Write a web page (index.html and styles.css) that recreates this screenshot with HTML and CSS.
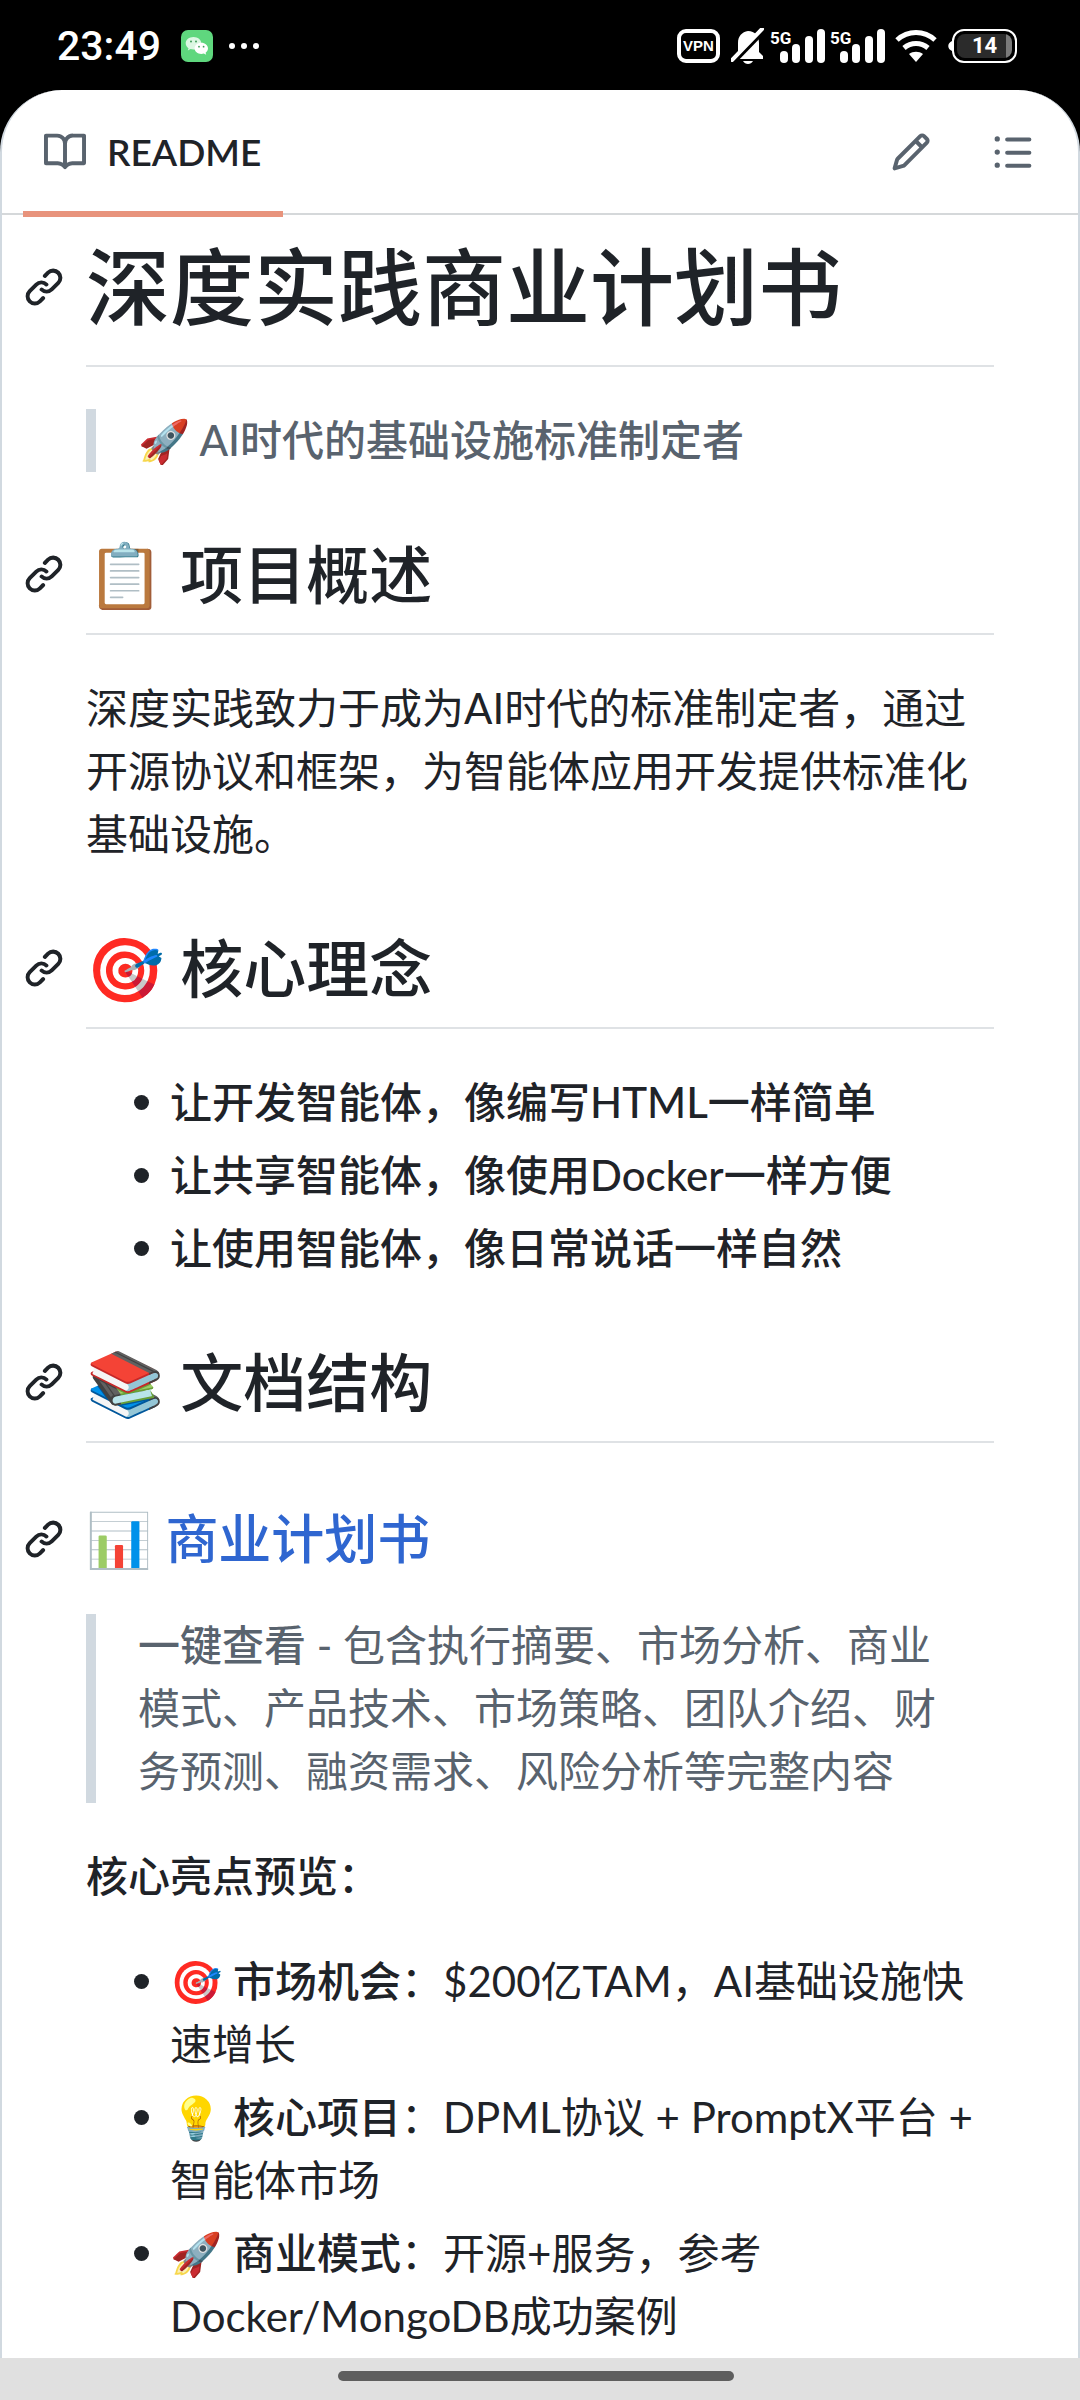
FILE: index.html
```html
<!DOCTYPE html>
<html lang="zh-CN">
<head>
    <meta charset="UTF-8">
    <meta name="viewport" content="width=device-width, initial-scale=1.0">
    <title>README</title>
    <link rel="stylesheet" href="styles.css">
</head>
<body>
    <svg class="defs" aria-hidden="true">
        <symbol id="icon-link" viewBox="0 0 16 16">
            <path d="m7.775 3.275 1.25-1.25a3.5 3.5 0 1 1 4.95 4.95l-2.5 2.5a3.5 3.5 0 0 1-4.95 0 .751.751 0 0 1 .018-1.042.751.751 0 0 1 1.042-.018 1.998 1.998 0 0 0 2.83 0l2.5-2.5a2.002 2.002 0 0 0-2.83-2.83l-1.25 1.25a.751.751 0 0 1-1.042-.018.751.751 0 0 1-.018-1.042Zm-4.69 9.64a1.998 1.998 0 0 0 2.83 0l1.25-1.25a.751.751 0 0 1 1.042.018.751.751 0 0 1 .018 1.042l-1.25 1.25a3.5 3.5 0 1 1-4.95-4.95l2.5-2.5a3.5 3.5 0 0 1 4.95 0 .751.751 0 0 1-.018 1.042.751.751 0 0 1-1.042.018 1.998 1.998 0 0 0-2.83 0l-2.5 2.5a1.998 1.998 0 0 0 0 2.83Z"/>
        </symbol>
        <symbol id="icon-signal" viewBox="0 0 46 34">
            <rect x="0" y="22" width="8" height="12" rx="4"/>
            <rect x="12" y="15" width="8" height="19" rx="4"/>
            <rect x="25" y="7" width="8" height="27" rx="4"/>
            <rect x="37" y="0" width="8" height="34" rx="4"/>
        </symbol>
    </svg>

    <div class="status-bar">
        <div class="status-left">
            <span class="time">23:49</span>
            <svg class="wechat" viewBox="0 0 32 32">
                <rect width="32" height="32" rx="7" fill="#5fd77e"/>
                <path d="M12.500 7c-4.400 0-7.800 2.800-7.800 6.300 0 2 1.100 3.700 2.800 4.900l-.7 2.300 2.700-1.400c1 .3 2 .5 3 .5 4.300 0 7.800-2.800 7.800-6.300S16.800 7 12.500 7Z" fill="#dcf7e3"/>
                <path d="M20.300 12.700c-3.800 0-6.700 2.500-6.700 5.600s3 5.600 6.700 5.600c.9 0 1.700-.1 2.500-.4l2.400 1.200-.6-2c1.500-1.100 2.400-2.600 2.400-4.400 0-3.100-3-5.600-6.700-5.600Z" fill="#fff"/>
                <g fill="#3f9c58">
                    <circle cx="10" cy="11.500" r="1"/>
                    <circle cx="15" cy="11.500" r="1"/>
                    <circle cx="18" cy="16.700" r=".9"/>
                    <circle cx="22.600" cy="16.700" r=".9"/>
                </g>
            </svg>
            <svg class="more" viewBox="0 0 30 6">
                <circle cx="3" cy="3" r="3"/>
                <circle cx="15" cy="3" r="3"/>
                <circle cx="27" cy="3" r="3"/>
            </svg>
        </div>
        <div class="status-right">
            <span class="vpn">VPN</span>
            <svg class="bell" viewBox="0 0 34 36">
                <path d="M7 25V15C7 8 11 4 17 3c7 0 11 5 11 12v9l4 4v3H3v-2Z"/>
                <path d="M12 33h10c-1 2-3 3-5 3s-4-1-5-3Z"/>
                <path d="M3 34 33 3" stroke="#000" stroke-width="4"/>
                <path d="M1 32 31 1" stroke="#fff" stroke-width="4" stroke-linecap="round"/>
            </svg>
            <span class="signal"><span class="net">5G</span><svg><use href="#icon-signal"/></svg></span>
            <span class="signal"><span class="net">5G</span><svg><use href="#icon-signal"/></svg></span>
            <svg class="wifi" viewBox="0 0 42 34">
                <path d="M2 11C13 1 29 1 40 11" fill="none" stroke="#fff" stroke-width="5"/>
                <path d="M9 19c7-6 17-6 24 0" fill="none" stroke="#fff" stroke-width="5"/>
                <path d="M14 25c4-3 10-3 14 0l-7 8Z"/>
            </svg>
            <svg class="battery-tip" viewBox="0 0 4 10"><path d="M4 0v10C-1 8-1 2 4 0Z"/></svg>
            <span class="battery"><span class="battery-level">14</span></span>
        </div>
    </div>

    <main class="readme">
        <header class="toolbar">
            <a class="tab" href="#readme">
                <svg class="icon" viewBox="0 0 16 16"><path d="M0 1.750A.75.75 0 0 1 .75 1h4.253c1.227 0 2.317.59 3 1.501A3.743 3.743 0 0 1 11.006 1h4.245a.75.75 0 0 1 .75.75v10.500a.75.75 0 0 1-.75.75h-4.507a2.250 2.250 0 0 0-1.591.659l-.622.621a.75.75 0 0 1-1.060 0l-.622-.621A2.250 2.250 0 0 0 5.258 13H.75a.75.75 0 0 1-.75-.75Zm7.251 10.324.004-5.073-.002-2.253A2.250 2.250 0 0 0 5.003 2.500H1.500v9h3.757a3.750 3.750 0 0 1 1.994.574ZM8.755 4.750l-.004 7.322a3.752 3.752 0 0 1 1.992-.572H14.500v-9h-3.495a2.250 2.250 0 0 0-2.250 2.250Z"/></svg>
                <span>README</span>
            </a>
            <div class="actions">
                <button type="button" aria-label="编辑">
                    <svg class="icon" viewBox="0 0 16 16"><path d="M11.013 1.427a1.750 1.750 0 0 1 2.474 0l1.086 1.086a1.750 1.750 0 0 1 0 2.474l-8.610 8.610c-.21.21-.47.364-.756.445l-3.251.93a.75.75 0 0 1-.927-.928l.929-3.250c.081-.286.235-.547.445-.758l8.610-8.610Zm.176 4.823L9.750 4.810l-6.286 6.287a.253.253 0 0 0-.064.108l-.558 1.953 1.953-.558a.253.253 0 0 0 .108-.064Zm1.238-3.763a.25.25 0 0 0-.354 0L10.811 3.750l1.439 1.440 1.263-1.263a.25.25 0 0 0 0-.354Z"/></svg>
                </button>
                <button type="button" aria-label="目录">
                    <svg class="icon" viewBox="0 0 16 16"><path d="M5.750 2.500h8.500a.75.75 0 0 1 0 1.500h-8.500a.75.75 0 0 1 0-1.500Zm0 5h8.500a.75.75 0 0 1 0 1.500h-8.500a.75.75 0 0 1 0-1.500Zm0 5h8.500a.75.75 0 0 1 0 1.500h-8.500a.75.75 0 0 1 0-1.500ZM2 14a1 1 0 1 1 0-2 1 1 0 0 1 0 2Zm1-6a1 1 0 1 1-2 0 1 1 0 0 1 2 0ZM2 4a1 1 0 1 1 0-2 1 1 0 0 1 0 2Z"/></svg>
                </button>
            </div>
        </header>

        <article class="markdown" id="readme">
            <h1><a class="anchor" href="#readme" aria-label="链接"><svg class="icon"><use href="#icon-link"/></svg></a>深度实践商业计划书</h1>

            <blockquote><strong>🚀 AI时代的基础设施标准制定者</strong></blockquote>

            <h2 id="overview"><a class="anchor" href="#overview" aria-label="链接"><svg class="icon"><use href="#icon-link"/></svg></a>📋 项目概述</h2>
            <p>深度实践致力于成为AI时代的标准制定者，通过开源协议和框架，为智能体应用开发提供标准化基础设施。</p>

            <h2 id="ideas"><a class="anchor" href="#ideas" aria-label="链接"><svg class="icon"><use href="#icon-link"/></svg></a>🎯 核心理念</h2>
            <ul>
                <li><strong>让开发智能体，像编写HTML一样简单</strong></li>
                <li><strong>让共享智能体，像使用Docker一样方便</strong></li>
                <li><strong>让使用智能体，像日常说话一样自然</strong></li>
            </ul>

            <h2 id="docs"><a class="anchor" href="#docs" aria-label="链接"><svg class="icon"><use href="#icon-link"/></svg></a>📚 文档结构</h2>

            <h3 id="plan"><a class="anchor" href="#plan" aria-label="链接"><svg class="icon"><use href="#icon-link"/></svg></a><span>📊 <a href="#plan">商业计划书</a></span></h3>
            <blockquote><strong>一键查看</strong> - 包含执行摘要、市场分析、商业模式、产品技术、市场策略、团队介绍、财务预测、融资需求、风险分析等完整内容</blockquote>

            <p><strong>核心亮点预览：</strong></p>
            <ul>
                <li>🎯 <strong>市场机会</strong>：$200亿TAM，AI基础设施快速增长</li>
                <li>💡 <strong>核心项目</strong>：DPML协议 + PromptX平台 + 智能体市场</li>
                <li>🚀 <strong>商业模式</strong>：开源+服务，参考Docker/MongoDB成功案例</li>
            </ul>
        </article>
    </main>

    <footer class="nav-bar"><span class="nav-pill"></span></footer>
</body>
</html>
```
FILE: styles.css
```css
* {
    box-sizing: border-box;
}

body {
    display: flex;
    flex-direction: column;
    min-height: 100vh;
    margin: 0;
    background: #000;
    color: #1f2328;
    font-family: Lato, "Noto Sans CJK SC", "Noto Color Emoji", sans-serif;
    font-size: 42px;
    line-height: 63px;
}

.defs {
    display: none;
}

.icon {
    display: block;
    width: 42px;
    height: 42px;
    fill: currentColor;
}

/* status bar */
.status-bar {
    display: flex;
    justify-content: space-between;
    align-items: center;
    height: 90px;
    padding: 2px 63px 0 57px;
    color: #fff;
    fill: #fff;
}

.status-left,
.status-right {
    display: flex;
    align-items: center;
}

.time {
    font-family: Roboto, sans-serif;
    font-size: 41px;
    font-weight: 500;
}

.wechat {
    width: 32px;
    height: 32px;
    margin: 0 16px 0 20px;
}

.more {
    width: 30px;
    height: 6px;
}

.vpn {
    width: 43px;
    height: 34px;
    margin-right: 11px;
    border: 4px solid #fff;
    border-radius: 9px;
    font-family: "Liberation Sans", sans-serif;
    font-size: 15px;
    font-weight: bold;
    line-height: 26px;
    text-align: center;
}

.bell {
    width: 34px;
    height: 36px;
    margin-right: 5px;
}

.signal {
    display: grid;
    width: 56px;
    height: 34px;
    margin-right: 4px;
}

.signal svg,
.net {
    grid-area: 1 / 1;
}

.signal svg {
    justify-self: end;
    width: 46px;
    height: 34px;
}

.net {
    font-family: Roboto, sans-serif;
    font-size: 17px;
    font-weight: bold;
    line-height: 18px;
}

.wifi {
    width: 42px;
    height: 34px;
    margin: 0 11px 0 5px;
}

.battery-tip {
    width: 4px;
    height: 10px;
}

.battery {
    width: 65px;
    height: 34px;
    padding: 3px;
    border: 2px solid #fff;
    border-radius: 12px;
}

.battery-level {
    display: block;
    height: 24px;
    border-radius: 8px;
    background: linear-gradient(to left, #7a7a7a 6px, #2b2b2b 6px);
    font-family: Roboto, sans-serif;
    font-size: 22px;
    font-weight: bold;
    line-height: 24px;
    text-align: center;
}

/* document */
.readme {
    flex: 1;
    border: solid #d1d9e0;
    border-width: 0 2px;
    border-radius: 62px 62px 0 0;
    background: #fff;
}

.toolbar {
    display: flex;
    justify-content: space-between;
    height: 125px;
    padding: 0 23px 0 21px;
    border-bottom: 2px solid #d5d8da;
}

.tab {
    display: flex;
    align-items: center;
    gap: 21px;
    height: 127px;
    padding: 2px 22px 0 21px;
    border-bottom: 6px solid #e8937c;
    color: #1f2328;
    font-size: 37px;
    font-weight: 600;
    text-decoration: none;
}

.tab .icon {
    color: #59636e;
}

.actions {
    display: flex;
    gap: 18px;
}

.actions button {
    padding: 0 21px;
    border: none;
    background: none;
    color: #59636e;
    cursor: pointer;
}

.markdown {
    padding: 20px 84px 10px;
}

h1,
h2,
h3 {
    display: flex;
    align-items: center;
    margin: 63px 0 42px;
    font-weight: 500;
}

h1,
h2 {
    border-bottom: 2px solid #dfe2e5;
}

h1 {
    margin-top: 0;
    padding-bottom: 26px;
    font-size: 84px;
    line-height: 104px;
}

h2 {
    padding-bottom: 21px;
    font-size: 63px;
    line-height: 77px;
}

h3 {
    font-size: 53px;
    line-height: 66px;
}

h3 a {
    color: #2f66d0;
    text-decoration: none;
}

.anchor {
    width: 63px;
    margin-left: -63px;
    color: #1f2328;
}

strong {
    font-weight: 500;
}

p,
ul,
blockquote {
    margin: 0 0 42px;
}

blockquote {
    padding: 0 42px;
    border-left: 10px solid #d1d9e0;
    color: #59636e;
}

ul {
    padding-left: 84px;
    list-style: none;
}

li::before {
    content: "";
    display: inline-block;
    width: 15px;
    height: 15px;
    margin: 0 21px 0 -36px;
    border-radius: 50%;
    background: #1f2328;
    vertical-align: 8px;
}

li + li {
    margin-top: 10px;
}

.markdown > :last-child {
    margin-bottom: 0;
}

/* gesture bar */
.nav-bar {
    display: flex;
    justify-content: center;
    height: 43px;
    padding: 13px 8px 0 0;
    background: #e0e0e0;
}

.nav-pill {
    width: 37%;
    height: 10px;
    border-radius: 5px;
    background: #5e5e5e;
}
```
